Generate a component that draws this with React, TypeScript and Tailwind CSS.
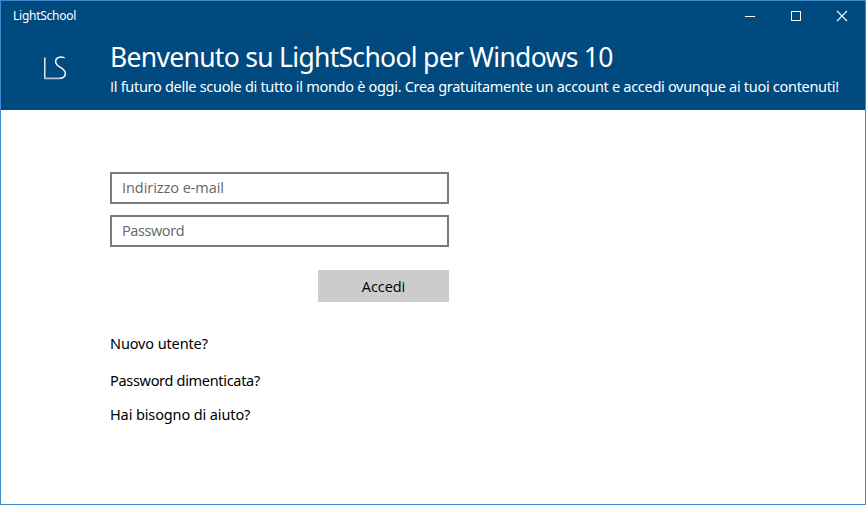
import React from "react";

function TitleBar() {
  return (
    <div className="flex h-[31px] items-start justify-between text-white">
      <span className="pl-3 pt-[7px] text-[12px] leading-4 tracking-[-0.25px]">LightSchool</span>
      <div className="flex">
        <button aria-label="Riduci a icona" className="flex h-[30px] w-[46px] items-center justify-center">
          <svg width="10" height="10" viewBox="0 0 10 10" shapeRendering="crispEdges">
            <rect y="5" width="10" height="1" fill="white" />
          </svg>
        </button>
        <button aria-label="Ingrandisci" className="flex h-[30px] w-[46px] items-center justify-center">
          <svg width="10" height="10" viewBox="0 0 10 10" shapeRendering="crispEdges">
            <rect x="0.5" y="0.5" width="9" height="9" fill="none" stroke="white" />
          </svg>
        </button>
        <button aria-label="Chiudi" className="flex h-[30px] w-[46px] items-center justify-center">
          <svg width="10" height="10" viewBox="0 0 10 10" className="overflow-visible">
            <path d="M0 0L10 10M10 0L0 10" stroke="white" strokeWidth="1.1" />
          </svg>
        </button>
      </div>
    </div>
  );
}

function Logo() {
  return (
    <svg width="24" height="24" viewBox="0 0 24 24" fill="none" stroke="#f0f5f8">
      <path d="M1.8 1.5V22.3" strokeWidth="1.4" />
      <path d="M1.2 22.4H17" stroke="#b3c8d8" strokeWidth="1.7" />
      <path
        d="M21.6 1.9C17.5 0.2 12.6 1.3 12.6 5.4C12.6 8.2 14.6 9.7 17.4 11.4C20.6 13.3 22.3 14.6 22.3 17.3C22.3 20.4 20 22.3 16.6 22.3"
        strokeWidth="1.5"
      />
    </svg>
  );
}

export default function App() {
  return (
    <div className="flex h-[505px] w-[866px] flex-col overflow-hidden border border-[#4189cd] bg-white font-['Noto_Sans','Open_Sans',sans-serif] text-[14px] text-black">
      <header className="h-[109px] shrink-0 bg-[#004a80]">
        <TitleBar />
        <div className="flex text-white">
          <div className="w-[109px] shrink-0 pl-[42px] pt-[24px]">
            <Logo />
          </div>
          <div className="whitespace-nowrap">
            <h1 className="pt-[6px] text-[26.5px] leading-[38px] tracking-[-0.7px]">
              Benvenuto su LightSchool per Windows 10
            </h1>
            <p className="text-[14.5px] leading-5 tracking-[-0.3px]">
              <span className="font-['Open_Sans',sans-serif]">I</span>l futuro delle scuole di tutto il mondo è oggi.
              Crea gratuitamente un account e accedi ovunque ai tuoi contenuti!
            </p>
          </div>
        </div>
      </header>

      <main className="flex flex-col pl-[109px] pt-[62px]">
        <form className="flex w-[339px] flex-col" onSubmit={(e) => e.preventDefault()}>
          <input
            type="email"
            placeholder="Indirizzo e-mail"
            className="h-8 border-2 border-[#7a7a7a] px-[10px] pb-[2px] font-['Open_Sans',sans-serif] text-[14.5px] tracking-[-0.05px] placeholder-[#666666] outline-none"
          />
          <input
            type="password"
            placeholder="Password"
            className="mt-[11px] h-8 border-2 border-[#7a7a7a] px-[10px] pb-[2px] font-['Open_Sans',sans-serif] text-[14.5px] tracking-[-0.4px] placeholder-[#666666] outline-none"
          />
          <button className="mt-[23px] h-8 w-[131px] self-end bg-[#cccccc] pt-px font-['Open_Sans',sans-serif] text-[14.5px] tracking-[-0.05px]">
            Accedi
          </button>
        </form>
        <nav className="flex flex-col items-start pt-[31px] text-[14.5px] leading-5">
          <a className="tracking-[-0.12px]">Nuovo utente?</a>
          <a className="mt-[17px] tracking-[-0.31px]">Password dimenticata?</a>
          <a className="mt-[14px] tracking-[-0.12px]">Hai bisogno di aiuto?</a>
        </nav>
      </main>
    </div>
  );
}
